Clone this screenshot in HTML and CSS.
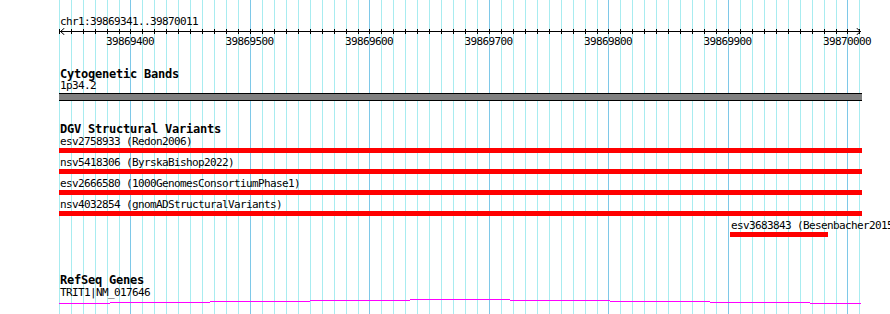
FILE: index.html
```html
<!DOCTYPE html>
<html>
<head>
<meta charset="utf-8">
<link rel="stylesheet" href="styles.css">
</head>
<body>
<div class="view">
  <div class="grid">
    <div class="grid-row">
      <div class="gblock"><i></i><i></i><i></i><i></i><i></i><i></i><i></i><i></i><i></i><i></i></div>
      <div class="gblock"><i></i><i></i><i></i><i></i><i></i><i></i><i></i><i></i><i></i><i></i></div>
      <div class="gblock"><i></i><i></i><i></i><i></i><i></i><i></i><i></i><i></i><i></i><i></i></div>
      <div class="gblock"><i></i><i></i><i></i><i></i><i></i><i></i><i></i><i></i><i></i><i></i></div>
      <div class="gblock"><i></i><i></i><i></i><i></i><i></i><i></i><i></i><i></i><i></i><i></i></div>
      <div class="gblock"><i></i><i></i><i></i><i></i><i></i><i></i><i></i><i></i><i></i><i></i></div>
      <div class="gblock"><i></i><i></i><i></i><i></i><i></i><i></i><i></i><i></i><i></i><i></i></div>
      <div class="gblock"><i></i><i></i><i></i><i></i><i></i><i></i><i></i><i></i><i></i><i></i></div>
    </div>
  </div>

  <div class="locus">chr1:39869341..39870011</div>

  <div class="ruler">
    <div class="ticks">
      <div class="tblock"><i></i><i></i><i></i><i></i><i></i><i></i><i></i><i></i><i></i><i></i></div>
      <div class="tblock"><i></i><i></i><i></i><i></i><i></i><i></i><i></i><i></i><i></i><i></i></div>
      <div class="tblock"><i></i><i></i><i></i><i></i><i></i><i></i><i></i><i></i><i></i><i></i></div>
      <div class="tblock"><i></i><i></i><i></i><i></i><i></i><i></i><i></i><i></i><i></i><i></i></div>
      <div class="tblock"><i></i><i></i><i></i><i></i><i></i><i></i><i></i><i></i><i></i><i></i></div>
      <div class="tblock"><i></i><i></i><i></i><i></i><i></i><i></i><i></i><i></i><i></i><i></i></div>
      <div class="tblock"><i></i><i></i><i></i><i></i><i></i><i></i><i></i><i></i><i></i><i></i></div>
      <div class="tblock"><i></i><i></i><i></i><i></i><i></i><i></i><i></i><i></i><i></i><i></i></div>
    </div>
    <svg class="arrow arrow-left" width="5" height="7" viewBox="0 0 5 7"><polyline points="4.5,0 0.5,3.5 4.5,7" fill="none" stroke="#000" stroke-width="1"/></svg>
    <svg class="arrow arrow-right" width="5" height="7" viewBox="0 0 5 7"><polyline points="0.5,0 4.5,3.5 0.5,7" fill="none" stroke="#000" stroke-width="1"/></svg>
  </div>

  <div class="scale">
    <div class="sblock"></div>
    <div class="sblock"><span>39869400</span></div>
    <div class="sblock"><span>39869500</span></div>
    <div class="sblock"><span>39869600</span></div>
    <div class="sblock"><span>39869700</span></div>
    <div class="sblock"><span>39869800</span></div>
    <div class="sblock"><span>39869900</span></div>
    <div class="sblock"><span>39870000</span></div>
  </div>

  <section class="track cyto">
    <h2 class="track-title">Cytogenetic Bands</h2>
    <div class="label">1p34.2</div>
    <div class="band"></div>
  </section>

  <section class="track dgv">
    <h2 class="track-title">DGV Structural Variants</h2>
    <div class="features">
      <div class="feature"><div class="label">esv2758933 (Redon2006)</div><div class="bar"></div></div>
      <div class="feature"><div class="label">nsv5418306 (ByrskaBishop2022)</div><div class="bar"></div></div>
      <div class="feature"><div class="label">esv2666580 (1000GenomesConsortiumPhase1)</div><div class="bar"></div></div>
      <div class="feature"><div class="label">nsv4032854 (gnomADStructuralVariants)</div><div class="bar"></div></div>
      <div class="feature" style="margin-left: 671px; width: 98px;"><div class="label">esv3683843 (Besenbacher2015)</div><div class="bar"></div></div>
    </div>
  </section>

  <section class="track refseq">
    <h2 class="track-title">RefSeq Genes</h2>
    <div class="label">TRIT1|NM_017646</div>
    <div class="intron">
      <span class="seg s4 w51"></span>
      <span class="seg s3"></span>
      <span class="seg s2"></span>
      <span class="seg s1"></span>
      <span class="seg s0"></span>
      <span class="seg s1"></span>
      <span class="seg s2"></span>
      <span class="seg s3"></span>
      <span class="seg s4 w51"></span>
    </div>
  </section>
</div>
</body>
</html>
```

FILE: styles.css
```css
html, body {
  margin: 0;
  padding: 0;
  background: #ffffff;
  overflow: hidden;
  width: 890px;
  height: 314px;
}

body {
  font-family: "DejaVu Sans Mono", "Liberation Mono", monospace;
  font-size: 11px;
  line-height: 11px;
  letter-spacing: -0.62px;
  color: #000;
}

.view {
  position: relative;
  margin-left: 59px;
  width: 803px;
  height: 314px;
}

/* background gridlines (content lies over them) */
.grid {
  position: absolute;
  inset: 0;
  overflow: hidden;
  z-index: 0;
}
.grid-row {
  display: flex;
  height: 100%;
  margin-left: -48.5px;
}
.gblock {
  flex: 0 0 119.5px;
  display: flex;
  height: 100%;
}
.gblock i {
  flex: 0 0 12px;
  box-sizing: border-box;
  border-left: 1px solid #a8ecf0;
}
.gblock i:first-child {
  border-left-color: #7ec8e8;
}
.gblock i:last-child {
  flex: 1 1 auto;
}

.locus, .ruler, .scale, .track {
  position: relative;
  z-index: 1;
}

.locus {
  padding-top: 16px;
  padding-left: 1px;
  height: 11px;
  white-space: nowrap;
}

/* ruler */
.ruler {
  margin-top: 2px;
  height: 5px;
  background: linear-gradient(#000, #000) 1px 2px / 801px 1px no-repeat;
}
.ticks {
  height: 5px;
  overflow: hidden;
  display: flex;
}
.tblock {
  flex: 0 0 119.5px;
  display: flex;
  height: 5px;
}
.tblock:first-child {
  margin-left: -48.5px;
}
.tblock i {
  flex: 0 0 12px;
  box-sizing: border-box;
  border-left: 1px solid #000;
}
.tblock i:last-child {
  flex: 1 1 auto;
}
.arrow {
  position: absolute;
  top: -1px;
  display: block;
}
.arrow-left { left: 1px; }
.arrow-right { left: 797px; }

/* scale numbers */
.scale {
  margin-top: 2px;
  display: flex;
  height: 11px;
  margin-left: -48.5px;
  white-space: nowrap;
}
.sblock {
  flex: 0 0 119.5px;
  height: 11px;
}
.sblock span {
  display: inline-block;
  transform: translateX(-50%);
}

/* tracks */
.track-title {
  margin: 0;
  font-size: 12px;
  line-height: 12px;
  font-weight: bold;
  letter-spacing: -0.22px;
  padding-left: 1px;
  height: 12px;
  white-space: nowrap;
}
.label {
  padding-left: 1px;
  height: 11px;
  white-space: nowrap;
}

.cyto {
  margin-top: 21px;
}
.band {
  margin-top: 2px;
  height: 8px;
  box-sizing: border-box;
  background: #808080;
  border-top: 1px solid #000;
  border-bottom: 1px solid #000;
}

.dgv {
  margin-top: 22px;
}
.features {
  margin-top: 1px;
  display: flex;
  flex-direction: column;
  gap: 4px;
}
.feature .bar {
  margin-top: 1px;
  height: 5px;
  background: #ff0000;
}

.refseq {
  margin-top: 37px;
}
.refseq .label {
  margin-top: 1px;
}
.intron {
  margin-top: 1px;
  display: flex;
  align-items: flex-start;
  height: 5px;
}
.seg {
  flex: 0 0 100px;
  height: 1px;
  background: #ff00ff;
}
.seg.w51 { flex-basis: 51px; }
.s0 { margin-top: 0; }
.s1 { margin-top: 1px; }
.s2 { margin-top: 2px; }
.s3 { margin-top: 3px; }
.s4 { margin-top: 4px; }
```
